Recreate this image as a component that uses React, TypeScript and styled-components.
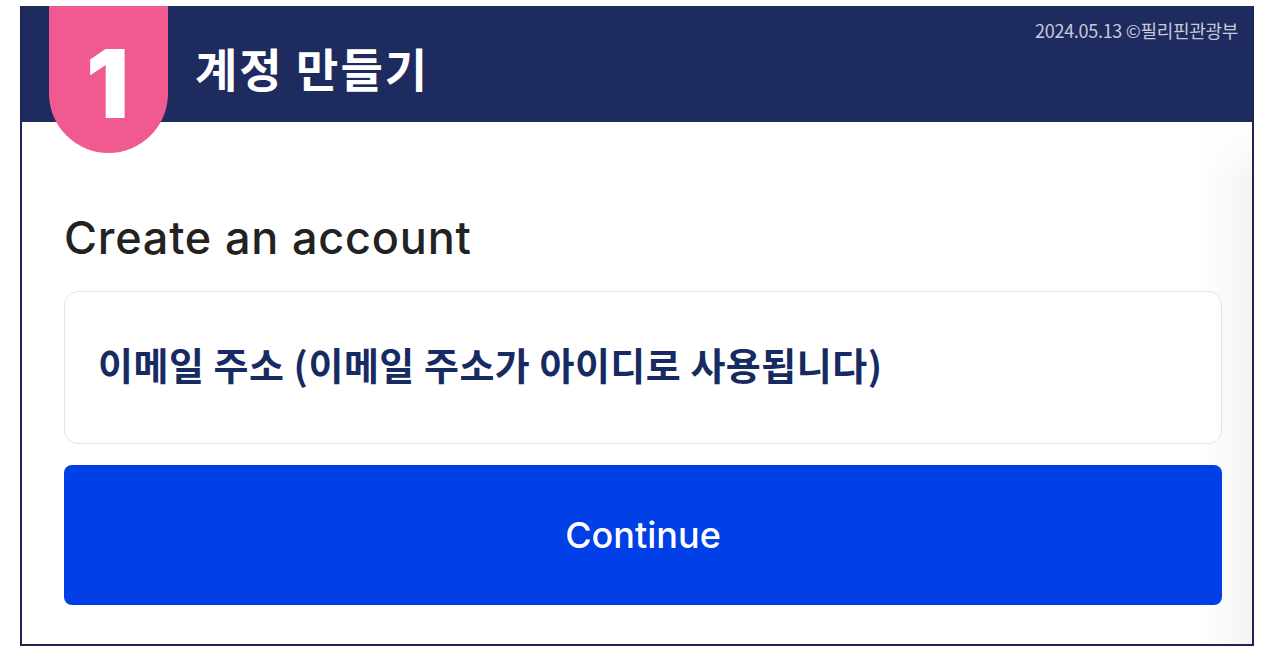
import React from "react";
import styled, { createGlobalStyle } from "styled-components";

const GlobalStyle = createGlobalStyle`
  html, body {
    margin: 0;
    padding: 0;
    background: #ffffff;
  }
  body {
    font-family: "Noto Sans CJK KR", "Noto Sans", sans-serif;
  }
`;

const App = () => {
  return (
    <>
      <GlobalStyle />
      <Page>
        <Frame>
          <Header>
            <StepTab>
              <StepNumber>1</StepNumber>
            </StepTab>
            <HeaderTitle>계정 만들기</HeaderTitle>
            <Credit>2024.05.13 ©필리핀관광부</Credit>
          </Header>
          <Content>
            <Heading>Create an account</Heading>
            <EmailField>
              <EmailLabel>이메일 주소 (이메일 주소가 아이디로 사용됩니다)</EmailLabel>
            </EmailField>
            <ContinueButton type="button">Continue</ContinueButton>
          </Content>
        </Frame>
      </Page>
    </>
  );
};

const Page = styled.div`
  width: 1280px;
  height: 653px;
  padding: 6px 0 0 20px;
  box-sizing: border-box;
`;

const Frame = styled.div`
  width: 1234px;
  height: 640px;
  box-sizing: border-box;
  border: 2px solid #1b2656;
  display: flex;
  flex-direction: column;
  background: #ffffff;
`;

const Header = styled.div`
  height: 116px;
  flex-shrink: 0;
  background: #1e2b5e;
  display: flex;
  align-items: flex-start;
  padding: 0 14px 0 27px;
  margin-top: -2px;
`;

const StepTab = styled.div`
  position: relative;
  z-index: 1;
  width: 119px;
  height: 147px;
  flex-shrink: 0;
  background: #f05a91;
  border-radius: 0 0 60px 60px;
  display: flex;
  justify-content: center;
`;

const StepNumber = styled.span`
  font-family: "Inter", "Noto Sans", sans-serif;
  font-weight: 900;
  font-size: 95px;
  line-height: 1;
  color: #ffffff;
  margin-top: 30px;
  margin-left: -2px;
`;

const HeaderTitle = styled.h1`
  margin: 34px 0 0 27px;
  font-family: "Noto Sans CJK KR", sans-serif;
  font-weight: 700;
  font-size: 46px;
  line-height: 1.2;
  color: #ffffff;
  letter-spacing: 2px;
`;

const Credit = styled.span`
  margin: 11px 0 0 auto;
  font-family: "Noto Sans CJK KR", sans-serif;
  font-size: 18px;
  color: #c6cad8;
  letter-spacing: -0.3px;
`;

const Content = styled.div`
  flex: 1;
  display: flex;
  flex-direction: column;
  padding: 90px 30px 0 42px;
  background:
    linear-gradient(to bottom, #ffffff 0, rgba(255, 255, 255, 0) 60px),
    linear-gradient(to right, #ffffff calc(100% - 55px), #f4f4f4 100%);
`;

const Heading = styled.h2`
  margin: 0 0 27px;
  font-family: "Inter", "Noto Sans", sans-serif;
  font-weight: 500;
  font-size: 45px;
  line-height: 52px;
  letter-spacing: 0.8px;
  color: #222222;
`;

const EmailField = styled.div`
  height: 153px;
  box-sizing: border-box;
  border: 1px solid #e4e4e4;
  border-radius: 14px;
  background: #ffffff;
  display: flex;
  align-items: center;
  padding: 0 0 8px 33px;
`;

const EmailLabel = styled.span`
  font-family: "Noto Sans CJK KR", sans-serif;
  font-weight: 700;
  font-size: 38px;
  color: #172a62;
  letter-spacing: 0.5px;
`;

const ContinueButton = styled.button`
  margin-top: 21px;
  height: 140px;
  border: none;
  border-radius: 8px;
  background: #0040e6;
  color: #ffffff;
  font-family: "Inter", "Noto Sans", sans-serif;
  font-weight: 500;
  font-size: 36px;
  cursor: pointer;
`;

export default App;
